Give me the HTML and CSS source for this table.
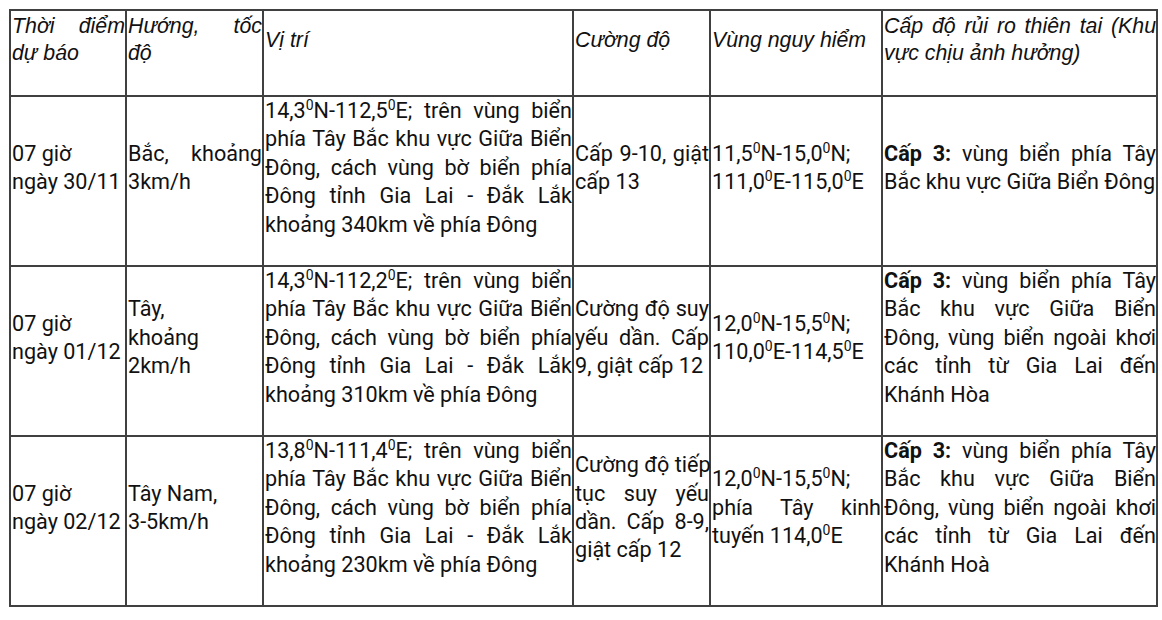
FILE: index.html
```html
<!DOCTYPE html>
<html lang="vi">
<head>
<meta charset="utf-8">
<title>Dự báo</title>
<link rel="stylesheet" href="styles.css">
</head>
<body>
<table class="tbl">
  <colgroup>
    <col class="c1"><col class="c2"><col class="c3"><col class="c4"><col class="c5"><col class="c6">
  </colgroup>
  <thead>
    <tr class="head">
      <th>Thời điểm dự báo</th>
      <th>Hướng, tốc độ</th>
      <th>Vị trí</th>
      <th>Cường độ</th>
      <th>Vùng nguy hiểm</th>
      <th>Cấp độ rủi ro thiên tai (Khu vực chịu ảnh hưởng)</th>
    </tr>
  </thead>
  <tbody>
    <tr class="row">
      <td>07 giờ<br>ngày 30/11</td>
      <td>Bắc, khoảng 3km/h</td>
      <td>14,3<sup>0</sup>N-112,5<sup>0</sup>E; trên vùng biển phía Tây Bắc khu vực Giữa Biển Đông, cách vùng bờ biển phía Đông tỉnh Gia Lai - Đắk Lắk khoảng 340km về phía Đông</td>
      <td>Cấp 9-10, giật cấp 13</td>
      <td>11,5<sup>0</sup>N-15,0<sup>0</sup>N; 111,0<sup>0</sup>E-115,0<sup>0</sup>E</td>
      <td><b>Cấp 3:</b> vùng biển phía Tây Bắc khu vực Giữa Biển Đông</td>
    </tr>
    <tr class="row">
      <td>07 giờ<br>ngày 01/12</td>
      <td>Tây,<br>khoảng 2km/h</td>
      <td>14,3<sup>0</sup>N-112,2<sup>0</sup>E; trên vùng biển phía Tây Bắc khu vực Giữa Biển Đông, cách vùng bờ biển phía Đông tỉnh Gia Lai - Đắk Lắk khoảng 310km về phía Đông</td>
      <td>Cường độ suy yếu dần. Cấp 9, giật cấp 12</td>
      <td>12,0<sup>0</sup>N-15,5<sup>0</sup>N; 110,0<sup>0</sup>E-114,5<sup>0</sup>E</td>
      <td><b>Cấp 3:</b> vùng biển phía Tây Bắc khu vực Giữa Biển Đông, vùng biển ngoài khơi các tỉnh từ Gia Lai đến Khánh Hòa</td>
    </tr>
    <tr class="row">
      <td>07 giờ<br>ngày 02/12</td>
      <td>Tây Nam,<br><span class="nw">3-5km/h</span></td>
      <td>13,8<sup>0</sup>N-111,4<sup>0</sup>E; trên vùng biển phía Tây Bắc khu vực Giữa Biển Đông, cách vùng bờ biển phía Đông tỉnh Gia Lai - Đắk Lắk khoảng 230km về phía Đông</td>
      <td><span class="nw">Cường độ tiếp</span> tục suy yếu <span class="nw">dần. Cấp 8-9,</span> giật cấp 12</td>
      <td>12,0<sup>0</sup>N-15,5<sup>0</sup>N; phía Tây kinh tuyến 114,0<sup>0</sup>E</td>
      <td><b>Cấp 3:</b> vùng biển phía Tây Bắc khu vực Giữa Biển Đông, vùng biển ngoài khơi các tỉnh từ Gia Lai đến Khánh Hoà</td>
    </tr>
  </tbody>
</table>
</body>
</html>
```
FILE: styles.css
```css
html, body {
  margin: 0;
  padding: 0;
  background: #ffffff;
}
body {
  padding: 9px 0 0 9px;
}
.tbl {
  border-collapse: collapse;
  table-layout: fixed;
  width: 1149px;
  color: #111111;
  font-family: Roboto, "Liberation Sans", sans-serif;
  font-size: 21.6px;
  line-height: 28.4px;
}
.c1 { width: 116px; }
.c2 { width: 137px; }
.c3 { width: 310px; }
.c4 { width: 137px; }
.c5 { width: 172px; }
.c6 { width: 275px; }
.tbl th,
.tbl td {
  border: 2px solid #404040;
  padding: 0 0 26px 1px;
  vertical-align: middle;
  text-align: justify;
  overflow: visible;
}
.tbl th {
  font-family: "Liberation Sans", Arial, sans-serif;
  font-style: italic;
  font-weight: normal;
  font-size: 21.33px;
  line-height: 27px;
}
.head { height: 86px; }
.row { height: 170px; }
.tbl sup {
  font-size: 14px;
  line-height: 0;
  vertical-align: 8px;
}
.tbl b { font-weight: 700; }
.nw { white-space: nowrap; }
```
